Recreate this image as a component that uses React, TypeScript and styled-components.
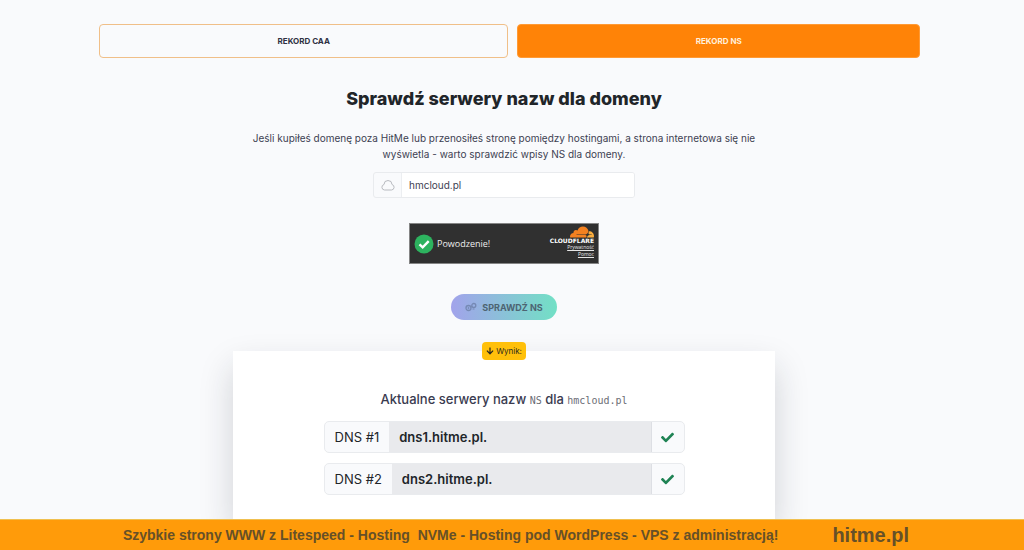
import React from "react";
import styled, { createGlobalStyle } from "styled-components";
import { FaArrowDown, FaCheck } from "react-icons/fa";

const GlobalStyle = createGlobalStyle`
  * { box-sizing: border-box; }
  body {
    margin: 0;
    background: #f9fafc;
    color: #3d4152;
    font-family: Inter, "Noto Sans", sans-serif;
    font-size: 10px;
  }
  button, input { font-family: inherit; }
`;

const Page = styled.div`
  min-height: 100vh;
  display: flex;
  flex-direction: column;
`;

const Main = styled.main`
  flex: 1;
  display: flex;
  flex-direction: column;
  align-items: center;
  padding: 24px 16px 0 0;
  overflow: hidden;
`;

const Tabs = styled.nav`
  align-self: stretch;
  display: flex;
  gap: 9px;
  padding: 0 88px 0 99px;
`;

const Tab = styled.button<{ $active?: boolean }>`
  flex: ${(p) => (p.$active ? "402 1 0" : "409 1 0")};
  height: 34px;
  padding: 0;
  border: 1px solid ${(p) => (p.$active ? "#ff9a35" : "#f0bf88")};
  border-radius: 4px;
  background: ${(p) => (p.$active ? "#ff8307" : "transparent")};
  color: ${(p) => (p.$active ? "#fff0dc" : "#2f3142")};
  font-size: 8px;
  font-weight: 700;
  text-transform: uppercase;
`;

const Title = styled.h1`
  margin: 29px 0 0;
  color: #212529;
  font-size: 18px;
  line-height: 24px;
  font-weight: 800;
`;

const Lead = styled.p`
  width: 52%;
  margin: 19px 0 0;
  text-align: center;
  line-height: 16px;
`;

const Form = styled.form`
  display: flex;
  flex-direction: column;
  align-items: center;
`;

const DomainField = styled.label`
  display: flex;
  width: 262px;
  height: 26px;
  margin-top: 10px;
  border: 1px solid #e9ebee;
  border-radius: 3px;
  overflow: hidden;
`;

const FieldIcon = styled.span`
  display: flex;
  align-items: center;
  justify-content: center;
  width: 28px;
  border-right: 1px solid #eceef1;
  color: #b8babf;
`;

const DomainInput = styled.input`
  flex: 1;
  min-width: 0;
  padding: 0 7px;
  border: 0;
  background: #fff;
  color: #3d4152;
  font-size: 10px;
`;

const Captcha = styled.div`
  display: flex;
  align-items: center;
  width: 190px;
  height: 41px;
  margin-top: 25px;
  padding: 0 4px;
  border: 1px solid #858585;
  background: #303030;
  color: #eee;
  font-family: "Open Sans", "Noto Sans", sans-serif;
  font-size: 9px;
`;

const CaptchaStatus = styled.span`
  flex: 1;
  display: flex;
  align-items: center;
  gap: 3px;
`;

const Brand = styled.div`
  display: flex;
  flex-direction: column;
  align-items: flex-end;
  padding-bottom: 3px;
`;

const BrandName = styled.span`
  color: #fff;
  font-family: "DejaVu Sans", sans-serif;
  font-size: 6px;
  line-height: 6px;
  font-weight: 700;
`;

const BrandLink = styled.a`
  color: #e6e6e6;
  font-size: 5px;
  line-height: 7px;
`;

const Submit = styled.button`
  display: flex;
  align-items: center;
  justify-content: center;
  gap: 5px;
  width: 106px;
  height: 26px;
  margin-top: 30px;
  padding: 0;
  border: 0;
  border-radius: 13px;
  background: linear-gradient(90deg, #a2a3eb, #72e0c5);
  color: #4d6472;
  font-size: 9px;
  font-weight: 700;
`;

const Result = styled.section`
  flex: 1;
  display: flex;
  flex-direction: column;
  align-items: center;
  width: 542px;
  max-width: 100%;
  margin-top: 31px;
  background: #fff;
  box-shadow: 0 16px 32px rgba(30, 35, 45, 0.18);
`;

const ResultBadge = styled.span`
  display: flex;
  align-items: center;
  gap: 2px;
  height: 18px;
  margin-top: -9px;
  padding: 0 4px;
  border-radius: 4px;
  background: #ffc00a;
  color: #2c2a20;
  font-size: 8px;
`;

const ResultTitle = styled.h2`
  margin: 30px 0 11px;
  color: #3a3b50;
  font-size: 13px;
  line-height: 18px;
  font-weight: 500;
  code {
    color: #6b6d75;
    font-family: "DejaVu Sans Mono", monospace;
    font-size: 10px;
    font-weight: 400;
  }
`;

const RecordList = styled.div`
  display: flex;
  flex-direction: column;
  gap: 10px;
`;

const Record = styled.label`
  display: flex;
  width: 361px;
  height: 32px;
  border: 1px solid #e9ebee;
  border-radius: 5px;
  overflow: hidden;
  background: #f9fafc;
  color: #212529;
  font-size: 13px;
`;

const RecordName = styled.span`
  display: flex;
  align-items: center;
  padding: 0 10px;
`;

const RecordValue = styled.input`
  flex: 1;
  min-width: 0;
  padding: 0 10px;
  border: 0;
  border-right: 1px solid #dddfe4;
  background: #e9eaed;
  color: #212529;
  font-size: 13px;
  font-weight: 600;
`;

const RecordState = styled.span`
  display: flex;
  align-items: center;
  justify-content: center;
  width: 32px;
  color: #1f8354;
`;

const Banner = styled.footer`
  position: sticky;
  bottom: 0;
  display: flex;
  align-items: center;
  gap: 54px;
  height: 31px;
  padding-left: 12%;
  border-top: 1px solid #f0c050;
  background: #ff9b0a;
  color: #665028;
  font-family: "Liberation Sans", Arial, sans-serif;
  font-weight: 700;
  font-size: 14px;
  white-space: nowrap;
`;

const BannerLink = styled.a`
  color: inherit;
  font-size: 20px;
  text-decoration: none;
`;

function CloudIcon() {
  return (
    <svg width="14" height="12" viewBox="0 0 14 12" fill="none" stroke="currentColor" aria-hidden="true">
      <path d="M3.5 11A2.800 2.800 0 0 1 3 5.500A4 4 0 0 1 11 5.500A2.800 2.800 0 0 1 10.500 11Z" />
    </svg>
  );
}

function GearsIcon() {
  return (
    <svg width="12" height="10" viewBox="0 0 12 10" fill="none" stroke="#7589b4" aria-hidden="true">
      <circle cx="3.500" cy="6" r="2.500" strokeWidth="1.300" />
      <circle cx="3.500" cy="6" r=".600" />
      <circle cx="8.800" cy="3.500" r="2" strokeWidth="1.300" />
      <path d="M5.800 5.200l1.500-.700M7.500 7h2" />
    </svg>
  );
}

function SuccessIcon() {
  return (
    <svg width="20" height="20" viewBox="0 0 20 20" fill="none" aria-hidden="true">
      <circle cx="10" cy="10" r="9.500" fill="#2db35f" />
      <path d="M5.500 10.300l3.200 3.100 6-6.200" stroke="#fff" strokeWidth="2.400" />
    </svg>
  );
}

function CloudflareLogo() {
  return (
    <svg width="24" height="12" viewBox="0 6 24 12" aria-hidden="true">
      <path
        fill="#f48120"
        d="M16.5088 16.8447c.1475-.5068.0908-.9707-.1553-1.3154-.2246-.3164-.6045-.499-1.0615-.5205l-8.6592-.1123a.1559.1559 0 0 1-.1333-.0713c-.0283-.042-.0351-.0986-.021-.1553.0278-.084.1123-.1484.2036-.1562l8.7359-.1123c1.0351-.0489 2.1601-.8868 2.5537-1.9136l.499-1.3013c.0215-.0561.0293-.1128.0147-.168-.5625-2.5463-2.835-4.4453-5.5499-4.4453-2.5039 0-4.6284 1.6177-5.3876 3.8614-.4927-.3658-1.1187-.5625-1.794-.499-1.2026.119-2.1665 1.083-2.2861 2.2856-.0283.31-.0069.6128.0635.894C1.5683 13.171 0 14.7754 0 16.752c0 .1748.0142.3515.0352.5273.0141.083.0844.1475.1689.1475h15.9814c.0909 0 .1758-.0645.2032-.1553l.12-.4268z"
      />
      <path
        fill="#faad3f"
        d="M19.2656 11.2813c-.0771 0-.1611 0-.2383.0112-.0566 0-.1054.0415-.127.0976l-.3378 1.1744c-.1475.5068-.0918.9707.1543 1.3164.2256.3164.6055.498 1.0625.5195l1.8437.1133c.0557 0 .1055.0263.1329.0703.0283.043.0351.1074.0214.1562-.0283.084-.1132.1485-.204.1553l-1.921.1123c-1.041.0488-2.1582.8867-2.5527 1.914l-.1406.3585c-.0283.0713.0215.1416.0986.1416h6.5977c.0771 0 .1474-.0489.169-.126.1122-.4082.1757-.837.1757-1.2803 0-2.6025-2.125-4.727-4.7344-4.727"
      />
    </svg>
  );
}

const records = [
  { name: "DNS #1", value: "dns1.hitme.pl." },
  { name: "DNS #2", value: "dns2.hitme.pl." },
];

export default function App() {
  return (
    <Page>
      <GlobalStyle />
      <Main>
        <Tabs>
          <Tab type="button">Rekord CAA</Tab>
          <Tab type="button" $active>Rekord NS</Tab>
        </Tabs>
        <Title>Sprawdź serwery nazw dla domeny</Title>
        <Lead>
          Jeśli kupiłeś domenę poza HitMe lub przenosiłeś stronę pomiędzy hostingami, a strona
          internetowa się nie wyświetla - warto sprawdzić wpisy NS dla domeny.
        </Lead>
        <Form onSubmit={(e) => e.preventDefault()}>
          <DomainField>
            <FieldIcon><CloudIcon /></FieldIcon>
            <DomainInput type="text" defaultValue="hmcloud.pl" aria-label="Domena" />
          </DomainField>
          <Captcha>
            <CaptchaStatus>
              <SuccessIcon />
              Powodzenie!
            </CaptchaStatus>
            <Brand>
              <CloudflareLogo />
              <BrandName>CLOUDFLARE</BrandName>
              <BrandLink href="#privacy">Prywatność</BrandLink>
              <BrandLink href="#help">Pomoc</BrandLink>
            </Brand>
          </Captcha>
          <Submit type="submit">
            <GearsIcon />
            SPRAWDŹ NS
          </Submit>
        </Form>
        <Result>
          <ResultBadge>
            <FaArrowDown size={8} />
            Wynik:
          </ResultBadge>
          <ResultTitle>
            Aktualne serwery nazw <code>NS</code> dla <code>hmcloud.pl</code>
          </ResultTitle>
          <RecordList>
            {records.map((r) => (
              <Record key={r.name}>
                <RecordName>{r.name}</RecordName>
                <RecordValue type="text" readOnly value={r.value} />
                <RecordState><FaCheck size={13} /></RecordState>
              </Record>
            ))}
          </RecordList>
        </Result>
      </Main>
      <Banner>
        <span>
          Szybkie strony WWW z Litespeed - Hosting &nbsp;NVMe - Hosting pod WordPress - VPS z administracją!
        </span>
        <BannerLink href="#hitme">hitme.pl</BannerLink>
      </Banner>
    </Page>
  );
}
